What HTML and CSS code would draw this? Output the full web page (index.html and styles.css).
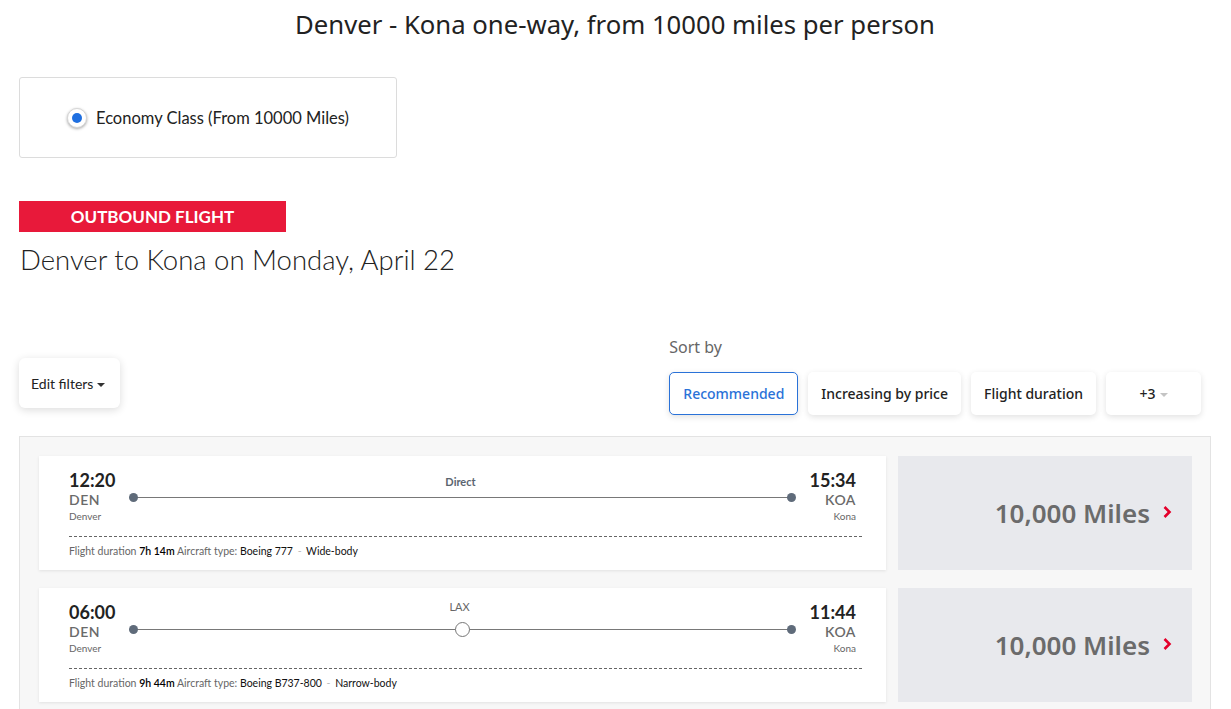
FILE: index.html
```html
<html lang="en">
<head>
    <meta charset="UTF-8">
    <meta name="viewport" content="width=device-width, initial-scale=1.0">
    <title>Denver - Kona</title>
    <link rel="stylesheet" href="styles.css">
</head>
<body>
    <div id="page">
        <h1 class="title">Denver - Kona one-way, from 10000 miles per person</h1>

        <div class="fare-box">
            <span class="radio"><span class="radio-dot"></span></span>
            <span class="fare-label">Economy Class (From 10000 Miles)</span>
        </div>

        <div class="badge">OUTBOUND FLIGHT</div>
        <h2 class="subtitle">Denver to Kona on Monday, April 22</h2>

        <div class="toolbar">
            <div class="filters">Edit filters <span class="caret"></span></div>
            <div class="sort">
                <div class="sort-label">Sort by</div>
                <div class="sort-buttons">
                    <div class="sort-btn active">Recommended</div>
                    <div class="sort-btn">Increasing by price</div>
                    <div class="sort-btn">Flight duration</div>
                    <div class="sort-btn more">+3 <span class="caret light"></span></div>
                </div>
            </div>
        </div>

        <div class="results">
            <div class="result">
                <div class="card">
                    <div class="route">
                        <div class="end">
                            <div class="time">12:20</div>
                            <div class="code">DEN</div>
                            <div class="city">Denver</div>
                        </div>
                        <div class="track">
                            <div class="track-label">Direct</div>
                            <div class="line">
                                <span class="dot start"></span>
                                <span class="dot finish"></span>
                            </div>
                        </div>
                        <div class="end right">
                            <div class="time">15:34</div>
                            <div class="code">KOA</div>
                            <div class="city">Kona</div>
                        </div>
                    </div>
                    <div class="details">
                        <span class="key">Flight duration</span> <span class="val dur">7h 14m</span>
                        <span class="key">Aircraft type:</span> <span class="val">Boeing 777</span>
                        <span class="sep">-</span> <span class="val">Wide-body</span>
                    </div>
                </div>
                <div class="price">10,000 Miles
                    <svg class="chev" width="10" height="14" viewBox="0 0 10 14"><path d="M2.5 2 L7.5 7 L2.5 12" fill="none" stroke="#e4002b" stroke-width="2.6"/></svg>
                </div>
            </div>

            <div class="result">
                <div class="card">
                    <div class="route">
                        <div class="end">
                            <div class="time">06:00</div>
                            <div class="code">DEN</div>
                            <div class="city">Denver</div>
                        </div>
                        <div class="track">
                            <div class="track-label stop">LAX</div>
                            <div class="line">
                                <span class="dot start"></span>
                                <span class="stop-dot"></span>
                                <span class="dot finish"></span>
                            </div>
                        </div>
                        <div class="end right">
                            <div class="time">11:44</div>
                            <div class="code">KOA</div>
                            <div class="city">Kona</div>
                        </div>
                    </div>
                    <div class="details">
                        <span class="key">Flight duration</span> <span class="val dur">9h 44m</span>
                        <span class="key">Aircraft type:</span> <span class="val">Boeing B737-800</span>
                        <span class="sep">-</span> <span class="val">Narrow-body</span>
                    </div>
                </div>
                <div class="price">10,000 Miles
                    <svg class="chev" width="10" height="14" viewBox="0 0 10 14"><path d="M2.5 2 L7.5 7 L2.5 12" fill="none" stroke="#e4002b" stroke-width="2.6"/></svg>
                </div>
            </div>
        </div>
    </div>
</body>
</html>
```

FILE: styles.css
```css
body{
    margin: 0;
    font-family: Lato, 'Noto Sans', sans-serif;
    color: #222;
    background: #fff;
}
#page{
    padding: 0 20px 0 19px;
}
.title{
    margin: 0;
    padding-top: 10px;
    font-family: 'Noto Sans', sans-serif;
    font-size: 25.7px;
    line-height: 30px;
    font-weight: 400;
    text-align: center;
    color: #222;
}
.fare-box{
    margin-top: 37px;
    width: 376px;
    height: 79px;
    border: 1px solid #dcdcdc;
    border-radius: 3px;
    display: flex;
    align-items: center;
    justify-content: center;
}
.radio{
    width: 18px;
    height: 18px;
    border-radius: 50%;
    background: #fff;
    border: 1px solid #d6d6d6;
    box-shadow: 0 1px 3px rgba(0,0,0,0.35);
    display: flex;
    align-items: center;
    justify-content: center;
    margin-right: 9px;
}
.radio-dot{
    width: 10px;
    height: 10px;
    border-radius: 50%;
    background: #1f6fe0;
}
.fare-label{
    font-size: 16.5px;
    color: #222;
}
.badge{
    margin-top: 43px;
    width: 267px;
    height: 31px;
    line-height: 31px;
    background: #e8193a;
    color: #fff;
    font-weight: 700;
    font-size: 17px;
    text-align: center;
}
.subtitle{
    margin: 10px 0 0 1px;
    font-size: 27.5px;
    line-height: 36px;
    font-weight: 300;
    color: #222;
}
.toolbar{
    margin-top: 58px;
    display: flex;
    justify-content: space-between;
    align-items: flex-end;
    padding-right: 10px;
}
.filters{
    margin-bottom: 7px;
    width: 101px;
    height: 50px;
    box-sizing: border-box;
    padding-left: 12px;
    display: flex;
    align-items: center;
    font-size: 14px;
    color: #222;
    background: #fff;
    border-radius: 6px;
    box-shadow: 0 2px 8px rgba(0,0,0,0.14);
}
.caret{
    display: inline-block;
    margin-left: 4px;
    margin-top: 3px;
    border-left: 4px solid transparent;
    border-right: 4px solid transparent;
    border-top: 4px solid #333;
}
.caret.light{
    border-top-color: #c4c4c4;
    margin-top: 2px;
}
.sort-label{
    font-family: 'Noto Sans', sans-serif;
    font-size: 16px;
    color: #666;
    margin-bottom: 14px;
}
.sort-buttons{
    display: flex;
    gap: 10px;
}
.sort-btn{
    height: 43px;
    box-sizing: border-box;
    padding: 0 13px;
    display: flex;
    align-items: center;
    justify-content: center;
    font-family: 'Noto Sans', sans-serif;
    font-size: 14px;
    font-weight: 500;
    color: #222;
    background: #fff;
    border-radius: 5px;
    box-shadow: 0 2px 6px rgba(0,0,0,0.12);
}
.sort-btn.active{
    color: #2a72d8;
    border: 1px solid #2a72d8;
    width: 129px;
}
.sort-btn.more{
    width: 95px;
}
.results{
    margin-top: 21px;
    background: #f7f7f7;
    border: 1px solid #e3e3e3;
    padding: 19px 18px 20px 19px;
    display: flex;
    flex-direction: column;
    gap: 18px;
}
.result{
    display: flex;
    gap: 12px;
    height: 114px;
}
.card{
    flex: 1;
    background: #fff;
    box-shadow: 0 1px 3px rgba(0,0,0,0.09);
    padding: 14px 24px 0 30px;
}
.route{
    display: flex;
}
.end{
    width: 60px;
}
.end.right{
    text-align: right;
    padding-right: 6px;
}
.time{
    font-size: 18px;
    line-height: 20px;
    font-weight: 700;
    color: #222;
}
.code{
    margin-top: 2px;
    font-size: 14px;
    line-height: 16px;
    font-weight: 600;
    letter-spacing: 0.5px;
    color: #6a6a6a;
}
.city{
    margin-top: 2px;
    font-size: 10px;
    line-height: 13px;
    color: #666;
}
.track{
    flex: 1;
    margin-right: 4px;
}
.track-label{
    margin-top: 5px;
    height: 14px;
    font-size: 11px;
    line-height: 14px;
    font-weight: 700;
    color: #5b6470;
    text-align: center;
}
.track-label.stop{
    margin-top: -2px;
    height: 21px;
    font-weight: 400;
    font-size: 11px;
    color: #666;
    padding-right: 2px;
}
.line{
    position: relative;
    margin-top: 8px;
    height: 1px;
    background: #787878;
    margin-left: 4px;
}
.dot{
    position: absolute;
    top: -4px;
    width: 9px;
    height: 9px;
    border-radius: 50%;
    background: #5f6b7a;
}
.dot.start{
    left: -4px;
}
.dot.finish{
    right: -4px;
}
.stop-dot{
    position: absolute;
    top: -7px;
    left: 50%;
    margin-left: -8px;
    width: 13px;
    height: 13px;
    border-radius: 50%;
    background: #fff;
    border: 1px solid #777;
}
.details{
    margin-top: 13px;
    padding-top: 7px;
    border-top: 1px dashed #666;
    font-size: 10.5px;
    line-height: 14px;
    color: #111;
}
.key{
    color: #666;
}
.val{
    color: #111;
}
.val.dur{
    font-weight: 600;
    color: #000;
}
.sep{
    color: #bbb;
    margin: 0 2px;
}
.price{
    width: 294px;
    background: #e8e9ed;
    display: flex;
    align-items: center;
    justify-content: flex-end;
    padding-right: 20px;
    box-sizing: border-box;
    font-family: 'Noto Sans', sans-serif;
    font-size: 26px;
    font-weight: 600;
    color: #6b6b6b;
}
.chev{
    margin-left: 12px;
    margin-top: -3px;
}
```
